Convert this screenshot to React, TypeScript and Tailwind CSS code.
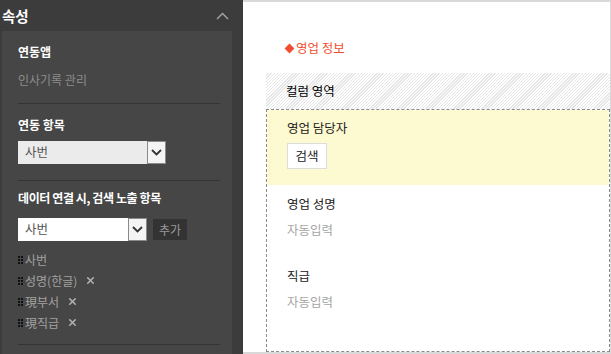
import { X } from "lucide-react";

const font = "font-['Noto_Sans_CJK_KR','Noto_Sans',sans-serif]";

function Handle() {
	return (
		<svg width="5" height="8" viewBox="0 0 5 8" className="mr-[2px] shrink-0">
			{[0, 3].map((x) =>
				[0, 3, 6].map((y) => <rect key={`${x}-${y}`} x={x} y={y} width="2" height="2" fill="#111" />),
			)}
		</svg>
	);
}

function SelectBox({ value, light, width }: { value: string; light?: boolean; width: string }) {
	return (
		<div className={`flex h-[23px] ${width} items-stretch ${light ? "bg-[#ebebeb]" : "bg-white"}`}>
			<span className="flex flex-1 items-center pl-[7px] text-[12.5px] text-[#555]">{value}</span>
			<span className="flex w-[19px] items-center justify-center border border-[#8a8a8a] bg-[#f4f4f4]">
				<svg width="11" height="7" viewBox="0 0 11 7">
					<polyline points="1,1 5.5,5.5 10,1" fill="none" stroke="#333" strokeWidth="1.8" />
				</svg>
			</span>
		</div>
	);
}

const items = [
	{ label: "사번", removable: false },
	{ label: "성명(한글)", removable: true },
	{ label: "現부서", removable: true },
	{ label: "現직급", removable: true },
];

export default function App() {
	return (
		<div className={`flex h-[354px] w-[611px] overflow-hidden bg-white ${font}`}>
			<aside className="flex w-[243px] shrink-0 flex-col bg-[#3c3c3c]">
				<div className="flex h-[31px] items-center justify-between pl-[2px] pr-[14px]">
					<span className="text-[14.5px] font-bold text-white">속성</span>
					<svg width="13" height="8" viewBox="0 0 13 8">
						<polyline points="1,7 6.5,1.5 12,7" fill="none" stroke="#a8a8a8" strokeWidth="1.4" />
					</svg>
				</div>
				<div className="flex flex-1">
					<div className="ml-[2px] w-[230px] bg-[#464646] pl-[16px] pr-[12px]">
						<section className="border-b border-[#353535] pb-[14px] pt-[12px]">
							<p className="text-[12px] font-bold leading-[18px] text-white">연동앱</p>
							<p className="mt-[10px] text-[12px] leading-[18px] text-[#8c8c8c]">인사기록 관리</p>
						</section>
						<section className="border-b border-[#353535] pb-[16px] pt-[12px]">
							<p className="text-[12px] font-bold leading-[18px] text-white">연동 항목</p>
							<div className="mt-[7px]">
								<SelectBox value="사번" light width="w-[148px]" />
							</div>
						</section>
						<section className="border-b border-[#353535] pb-[11px] pt-[8px]">
							<p className="text-[12px] font-bold leading-[18px] tracking-[-0.4px] text-white">
								데이터 연결 시, 검색 노출 항목
							</p>
							<div className="mt-[11px] flex items-center gap-[6px]">
								<SelectBox value="사번" width="w-[129px]" />
								<button className="flex h-[21px] w-[34px] items-center justify-center bg-[#333] text-[12px] text-[#9a9a9a]">
									추가
								</button>
							</div>
							<ul className="mt-[8px]">
								{items.map((it) => (
									<li key={it.label} className="flex h-[21px] items-center text-[12px] text-[#a2a2a2]">
										<Handle />
										<span>{it.label}</span>
										{it.removable ? (
											<X className="ml-[8px] text-[#b0b0b0]" size={11} strokeWidth={3.5} />
										) : null}
									</li>
								))}
							</ul>
						</section>
					</div>
				</div>
			</aside>
			<main className="flex flex-1 flex-col border-y-2 border-r border-[#d9d9d9] pl-[23px]">
				<p className="mt-[37px] flex items-center pl-[20px] text-[12.5px] leading-[18px] text-[#ef4f31]">
					<span className="mr-[1px] inline-block h-[7px] w-[7px] rotate-45 bg-[#ef4f31]" />
					<span className="ml-[2px]">영업 정보</span>
				</p>
				<div className="mt-[16px] flex h-[36px] items-center bg-[repeating-linear-gradient(135deg,#fff_0,#fff_1.3px,#e6e6e6_1.3px,#e6e6e6_2.2px)] pl-[20px] text-[12.5px] text-black">
					컬럼 영역
				</div>
				<div className="flex-1 border border-dashed border-[#8a8a8a]">
					<div className="h-[75px] bg-[#fdf9d0] pl-[20px] pt-[9px]">
						<p className="text-[12.5px] leading-[18px] text-[#222]">영업 담당자</p>
						<button className="mt-[6px] flex h-[26px] w-[40px] items-center justify-center border border-[#dcdcdc] bg-white text-[12.5px] text-[#222]">
							검색
						</button>
					</div>
					<div className="pl-[20px] pt-[10px]">
						<p className="text-[12.5px] leading-[18px] text-[#222]">영업 성명</p>
						<p className="mt-[8px] text-[12.5px] leading-[18px] text-[#a5a5a5]">자동입력</p>
						<p className="mt-[28px] text-[12.5px] leading-[18px] text-[#222]">직급</p>
						<p className="mt-[8px] text-[12.5px] leading-[18px] text-[#a5a5a5]">자동입력</p>
					</div>
				</div>
			</main>
		</div>
	);
}
